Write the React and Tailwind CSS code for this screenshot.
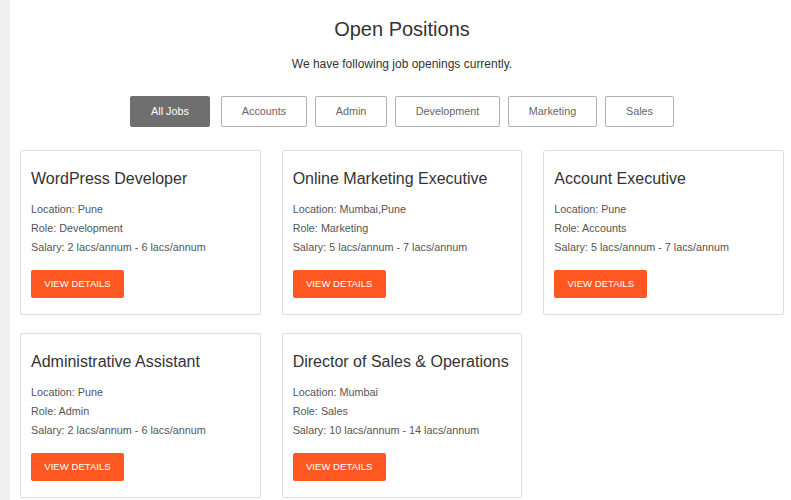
import React from "react";

const filters = [
  { label: "All Jobs", active: true, w: "w-[80px]" },
  { label: "Accounts", w: "w-[86px]", extra: "ml-[3px]" },
  { label: "Admin", w: "w-[72px]" },
  { label: "Development", w: "w-[105px]" },
  { label: "Marketing", w: "w-[89px]" },
  { label: "Sales", w: "w-[69px]" },
];

const jobs = [
  { title: "WordPress Developer", location: "Pune", role: "Development", salary: "2 lacs/annum - 6 lacs/annum" },
  { title: "Online Marketing Executive", location: "Mumbai,Pune", role: "Marketing", salary: "5 lacs/annum - 7 lacs/annum" },
  { title: "Account Executive", location: "Pune", role: "Accounts", salary: "5 lacs/annum - 7 lacs/annum" },
  { title: "Administrative Assistant", location: "Pune", role: "Admin", salary: "2 lacs/annum - 6 lacs/annum" },
  { title: "Director of Sales & Operations", location: "Mumbai", role: "Sales", salary: "10 lacs/annum - 14 lacs/annum" },
];

function JobCard({ job }) {
  return (
    <div className="border border-[#dedede] rounded-[2px] bg-white pt-[18px] pb-[16px] pl-[10px] pr-[10px]">
      <h3 className="text-[16px] leading-[20px] text-[#333333] font-normal whitespace-nowrap">{job.title}</h3>
      <div className="mt-[11px] text-[10.8px] leading-[19px] text-[#555555]">
        <p>Location: {job.location}</p>
        <p>Role: {job.role}</p>
        <p>Salary: {job.salary}</p>
      </div>
      <button className="mt-[13px] w-[93px] h-[28px] bg-[#ff5722] rounded-[2px] text-white text-[9.6px] uppercase flex items-center justify-center">
        View Details
      </button>
    </div>
  );
}

export default function App() {
  return (
    <div className="flex min-h-[500px] bg-white" style={{ fontFamily: '"Liberation Sans", Arial, sans-serif' }}>
      <div className="w-[10px] shrink-0 bg-[#efefef]" />
      <div className="flex-1 pl-[10px] pr-[7px]">
        <h1 className="pt-[17px] text-center text-[20px] leading-[24px] text-[#333333] font-normal">Open Positions</h1>
        <p className="mt-[15px] text-center text-[12px] leading-[16px] text-[#333333]">We have following job openings currently.</p>
        <div className="mt-[24px] flex justify-center gap-[8px]">
          {filters.map((f) => (
            <button
              key={f.label}
              className={`${f.w} ${f.extra || ""} h-[31px] rounded-[2px] text-[10.8px] flex items-center justify-center ${
                f.active ? "bg-[#6f6f6f] border border-[#6f6f6f] text-white" : "bg-white border border-[#b0b0b0] text-[#666666]"
              }`}
            >
              {f.label}
            </button>
          ))}
        </div>
        <div className="mt-[23px] grid grid-cols-3 gap-x-[21px] gap-y-[18px]">
          {jobs.map((j) => (
            <JobCard key={j.title} job={j} />
          ))}
        </div>
      </div>
    </div>
  );
}
